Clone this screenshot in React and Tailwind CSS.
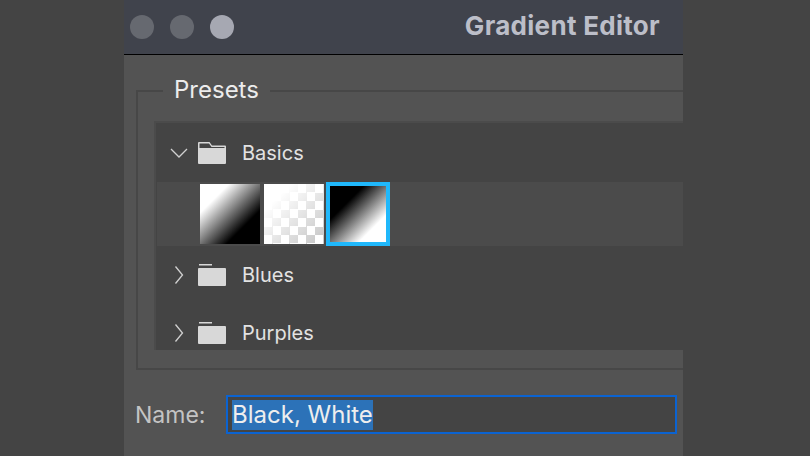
const checker =
  "bg-[linear-gradient(135deg,#fff_22%,#fff0_95%),conic-gradient(#c8c8c8_25%,#fff_0_50%,#c8c8c8_0_75%,#fff_0)] bg-[size:100%_100%,17px_17px]";

function FolderOpen() {
  return (
    <svg width="28" height="22" viewBox="0 0 28 22" className="shrink-0">
      <path
        fillRule="evenodd"
        fill="#d8d8d8"
        d="M1 0h10.500l2.500 3.500H27a1 1 0 0 1 1 1V21a1 1 0 0 1-1 1H1a1 1 0 0 1-1-1V1a1 1 0 0 1 1-1zM1.500 1.500V6h25V5h-13L11 1.500z"
      />
    </svg>
  );
}

function FolderClosed() {
  return (
    <svg width="28" height="22" viewBox="0 0 28 22" className="shrink-0">
      <path fill="#d8d8d8" d="M1 0h13v1.500H1z" />
      <path fill="#d8d8d8" d="M1 4h26a1 1 0 0 1 1 1v16a1 1 0 0 1-1 1H1a1 1 0 0 1-1-1V5a1 1 0 0 1 1-1z" />
    </svg>
  );
}

function Chevron({ open }) {
  return (
    <svg width="18" height="18" viewBox="0 0 18 18" className="shrink-0" fill="none" stroke="#d0d0d0" strokeWidth="1.300">
      <path d={open ? "M1 5l8 8 8-8" : "M5.500 0.500l7 8.500-7 8.500"} />
    </svg>
  );
}

function GroupRow({ name, className }) {
  return (
    <div className={`flex items-center pl-[14px] ${className}`}>
      <Chevron />
      <span className="ml-[10px]">
        <FolderClosed />
      </span>
      <span className="ml-4 text-[20px] text-[#e2e2e2]">{name}</span>
    </div>
  );
}

export default function App() {
  return (
    <div className="w-[810px] h-[456px] overflow-hidden bg-[#444444] pl-[124px] font-['Inter',sans-serif]">
      <div className="w-[559px] h-full flex flex-col bg-[#535353]">
        <div className="h-[55px] shrink-0 flex items-center px-[6px] bg-[#40434c] border-b border-black">
          <div className="flex gap-4">
            <span className="w-6 h-6 rounded-full bg-[#666970]" />
            <span className="w-6 h-6 rounded-full bg-[#666970]" />
            <span className="w-6 h-6 rounded-full bg-[#a6a8b2]" />
          </div>
          <span className="ml-auto mr-[17px] pb-[3px] text-[26px] font-bold tracking-[0.3px] text-[#bcbec8]">Gradient Editor</span>
        </div>

        <div className="relative ml-[12px] mt-[35px] h-[280px] border-2 border-r-0 border-[#474747] pl-[16px] pt-[29px]">
          <span className="absolute left-[25px] -top-[20px] bg-[#535353] px-[11px] text-[24px] leading-[36px] text-[#ececec]">
            Presets
          </span>
          <div className="h-[229px] border-l-2 border-t-2 border-[#4b4b4b] bg-[#444444] overflow-hidden">
            <div className="h-[59px] flex items-center pl-[14px]">
              <Chevron open />
              <span className="ml-[10px]">
                <FolderOpen />
              </span>
              <span className="ml-4 text-[20px] text-[#e2e2e2]">Basics</span>
            </div>
            <div className="ml-px h-[64px] bg-[#4b4b4b] flex items-center pl-[43px]">
              <div className="w-[60px] h-[60px] bg-[linear-gradient(135deg,#fff_24%,#000_72%)]" />
              <div className={`ml-1 w-[60px] h-[60px] ${checker}`} />
              <div className="ml-[2px] w-[64px] h-[64px] border-4 border-[#20b8fb] bg-[linear-gradient(135deg,#000_30%,#fff_76%)]" />
            </div>
            <GroupRow name="Blues" className="h-[58px]" />
            <GroupRow name="Purples" className="h-[46px] pt-[12px]" />
          </div>
        </div>

        <div className="mt-[25px] flex items-center pl-[11px]">
          <span className="w-[91px] pt-[2px] text-[23px] text-[#c4c4c4]">Name:</span>
          <div className="w-[451px] h-[39px] border-2 border-[#0b63d1] bg-[#444444] flex items-center pl-1">
            <span className="bg-[#2c72b8] text-[24px] leading-[30px] text-[#eeeeee]">Black, White</span>
          </div>
        </div>
      </div>
    </div>
  );
}
